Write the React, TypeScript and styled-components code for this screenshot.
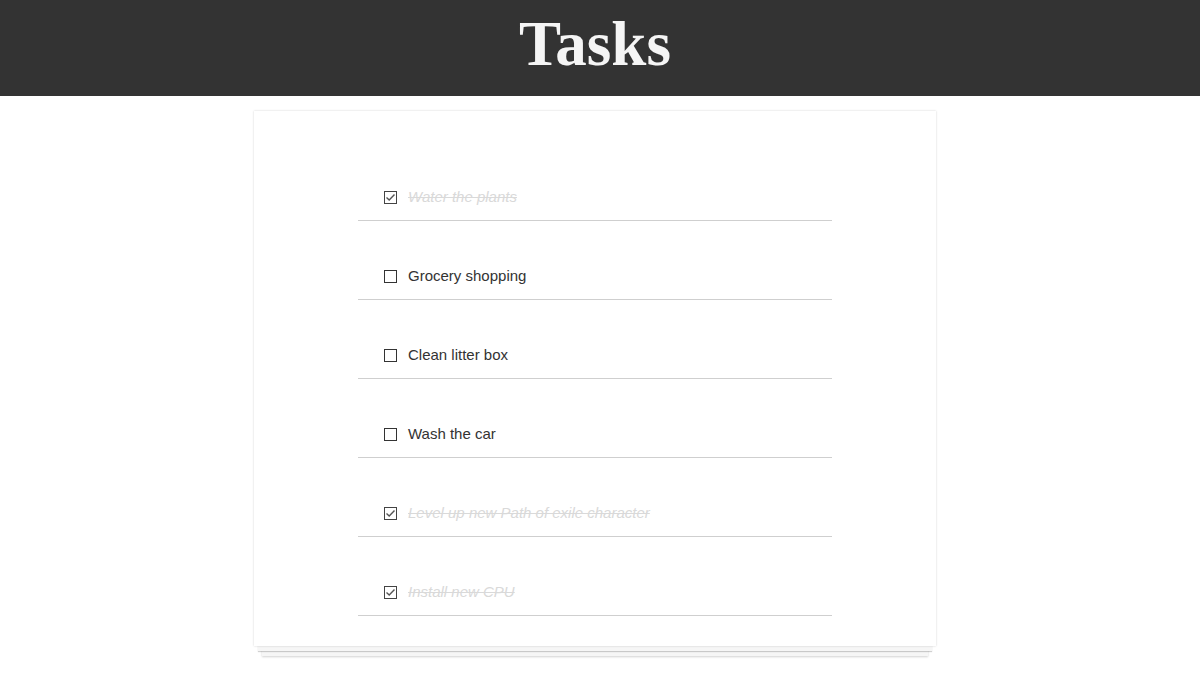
import React from "react";
import styled, { createGlobalStyle } from "styled-components";

const Global = createGlobalStyle`
  html, body { margin: 0; padding: 0; background: #fff; }
  body { font-family: "Liberation Sans", Arial, sans-serif; }
`;

const Page = styled.div`
  padding-right: 10px;
  padding-bottom: 40px;
  min-height: 695px;
  box-sizing: border-box;
  display: flex;
  flex-direction: column;
  align-items: center;
`;

const Header = styled.header`
  height: 96px;
  width: 100%;
  margin-right: -10px;
  padding-right: 10px;
  background: #333;
  display: flex;
  align-items: center;
  justify-content: center;
`;

const Title = styled.h1`
  margin: 0;
  font-family: "Liberation Serif", "Times New Roman", serif;
  font-weight: bold;
  font-size: 63px;
  line-height: 1;
  color: #f5f5f5;
  margin-top: -7px;
`;

const Card = styled.section`
  margin-top: 15px;
  width: 682px;
  box-sizing: border-box;
  padding: 31px 0 30px;
  background: #fff;
  display: flex;
  justify-content: center;
  box-shadow: 0 0 2px rgba(0, 0, 0, 0.18), 0 9px 0 -4px #f6f6f6,
    0 10px 1px -4px rgba(0, 0, 0, 0.18), 0 18px 0 -8px #f6f6f6,
    0 19px 2px -8px rgba(0, 0, 0, 0.18);
`;

const List = styled.ul`
  list-style: none;
  margin: 0;
  padding: 0;
  width: 474px;
`;

const Row = styled.li`
  display: flex;
  align-items: center;
  gap: 11px;
  padding: 46px 0 14px 26px;
  border-bottom: 1px solid #cfcfcf;
`;

const Box = styled.span<{ $checked: boolean }>`
  width: 13px;
  height: 13px;
  box-sizing: border-box;
  border: 1px solid ${(p) => (p.$checked ? "#444" : "#333")};
  background: #fff;
  display: flex;
  align-items: center;
  justify-content: center;
  flex-shrink: 0;
`;

const Label = styled.span<{ $done: boolean }>`
  font-size: 15px;
  line-height: 18px;
  color: ${(p) => (p.$done ? "#d9d9d9" : "#333")};
  font-style: ${(p) => (p.$done ? "italic" : "normal")};
  text-decoration: ${(p) => (p.$done ? "line-through" : "none")};
`;

const tasks = [
  { text: "Water the plants", done: true },
  { text: "Grocery shopping", done: false },
  { text: "Clean litter box", done: false },
  { text: "Wash the car", done: false },
  { text: "Level up new Path of exile character", done: true },
  { text: "Install new CPU", done: true },
];

export default function App() {
  return (
    <>
      <Global />
      <Page>
        <Header>
          <Title>Tasks</Title>
        </Header>
        <Card>
          <List>
            {tasks.map((t) => (
              <Row key={t.text}>
                <Box $checked={t.done}>
                  {t.done && (
                    <svg width="11" height="11" viewBox="0 0 11 11">
                      <path d="M1.5 5.5 L4.2 8 L9.5 2.5" fill="none" stroke="#555" strokeWidth="1.4" />
                    </svg>
                  )}
                </Box>
                <Label $done={t.done}>{t.text}</Label>
              </Row>
            ))}
          </List>
        </Card>
      </Page>
    </>
  );
}
